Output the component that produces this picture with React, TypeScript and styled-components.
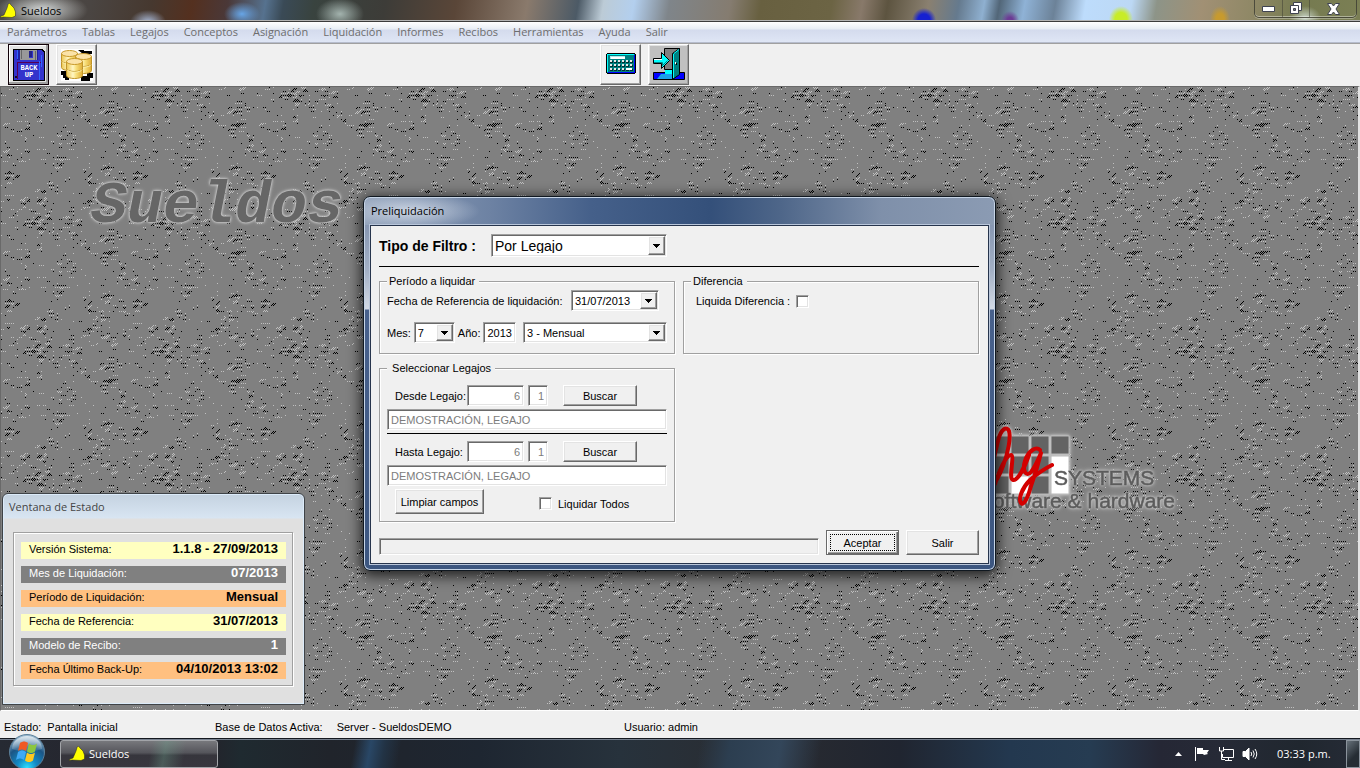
import React from "react";
import styled, { createGlobalStyle, css } from "styled-components";

const GlobalStyle = createGlobalStyle`
  * { box-sizing: border-box; }
  body { margin: 0; background: #f0f0f0; }
  body, button, input, select {
    font-family: "Liberation Sans", Arial, sans-serif;
    font-size: 11px;
    line-height: 14px;
    color: #000;
  }
`;

const uiFont = `"Open Sans", "Noto Sans", sans-serif`;

const sunken = css`
  border: 1px solid;
  border-color: #a0a0a0 #fff #fff #a0a0a0;
  box-shadow: inset 1px 1px #696969, inset -1px -1px #e3e3e3;
`;
const raised = css`
  border: 1px solid;
  border-color: #fff #696969 #696969 #fff;
  box-shadow: inset -1px -1px #a0a0a0, inset 1px 1px #e3e3e3;
`;

const Screen = styled.div`
  display: flex;
  flex-direction: column;
  min-height: 100vh;
`;

/* ---------- main window chrome ---------- */

const TitleBar = styled.header`
  display: flex;
  justify-content: space-between;
  height: 22px;
  padding-right: 2px;
  border-bottom: 1px solid #3c3c3c;
  box-shadow: inset 0 -1px #b4b4b4;
  font-family: ${uiFont};
  background:
    radial-gradient(ellipse 46px 18px at 42px 10px, rgba(235, 240, 240, 0.85), transparent),
    radial-gradient(ellipse 18px 12px at 148px 22px, #a9b9d8, transparent),
    radial-gradient(ellipse 18px 12px at 242px 14px, #67a5e6, transparent),
    radial-gradient(ellipse 24px 16px at 340px 14px, #a3b3ae, transparent),
    radial-gradient(ellipse 12px 12px at 924px 20px, #1620d0 50%, transparent),
    radial-gradient(ellipse 9px 9px at 1010px 20px, #6c3b94 30%, transparent),
    radial-gradient(ellipse 12px 13px at 1121px 19px, #c8ec28 50%, transparent),
    radial-gradient(ellipse 10px 13px at 1220px 19px, #c79a2e 40%, transparent),
    radial-gradient(ellipse 16px 12px at 1305px 18px, #c6d2c4, transparent),
    linear-gradient(100deg,
      #4b4a48 0px, #4a4542 90px, #46382f 150px, #54301f 190px, #4a3838 225px,
      #56728f 262px, #3a4a56 280px, #39433f 310px, #3d3c38 380px, #5a4638 450px,
      #8a7a6c 520px, #4c5a66 570px, #bccbd6 595px, #b3cfee 625px, #7f858a 660px,
      #857c70 720px, #686040 750px, #6c6444 820px, #88796a 850px, #5d5440 875px,
      #8a8070 915px, #657a8e 945px, #8fb0d0 970px, #526678 985px, #8fb2d6 1010px,
      #6c8298 1040px, #bddcfc 1070px, #bcd8f4 1115px, #8d9488 1140px, #a19074 1185px,
      #8f8866 1235px, #757a50 1280px, #7b7f54 1340px);
`;
const AppTitle = styled.h1`
  display: flex;
  align-items: center;
  gap: 5px;
  margin: 0;
  font-size: 11px;
  line-height: 20px;
  font-weight: 400;
`;
const WindowControls = styled.div`
  display: flex;
  height: 18px;
  margin-right: 1px;
  border: 1px solid rgba(60, 60, 50, 0.8);
  border-top: 0;
  border-radius: 0 0 5px 5px;
  box-shadow: inset 0 -1px rgba(255, 255, 255, 0.4), 0 1px rgba(255, 255, 255, 0.3);
`;
const WindowControl = styled.button<{ $wide?: boolean }>`
  display: grid;
  place-items: center;
  width: ${(p) => (p.$wide ? 47 : 27)}px;
  padding: 0;
  border: 0;
  border-left: 1px solid rgba(60, 60, 50, 0.5);
  background: transparent;
  &:first-child { border-left: 0; }
`;

const MenuBar = styled.nav`
  display: flex;
  gap: 15px;
  height: 21px;
  padding: 0 7px;
  border-bottom: 1px solid #b6bccc;
  background: linear-gradient(#fff 0, #e8edf5 7px, #d4dbed 8px, #dfe6f5 100%);
`;
const MenuLink = styled.a`
  color: #6d6d6d;
  font-family: ${uiFont};
  font-size: 11px;
  line-height: 20px;
  text-decoration: none;
`;

const ToolBar = styled.div`
  display: grid;
  grid-template-columns: 592fr 760fr;
  padding: 1px 0 1px 8px;
  background: #f0f0f0;
  box-shadow: inset 0 1px #a0a0a0;
`;
const ToolGroup = styled.div`
  display: flex;
  gap: 7px;
`;
const ToolButton = styled.button<{ $face?: string; $focused?: boolean }>`
  display: grid;
  place-items: center;
  width: 41px;
  height: 41px;
  padding: 0;
  background: ${(p) => p.$face || "#f0f0f0"};
  ${raised}
  ${(p) => p.$focused && css`
    border-color: #100008;
    background: #e3e3e3;
    box-shadow: inset -2px -2px #a0a0a0, inset 1px 1px #fff;
  `}
`;

/* ---------- desktop ---------- */

const Desktop = styled.main`
  position: relative;
  flex: 1;
  min-height: 620px;
  overflow: hidden;
  border: 1px solid #696969;
  border-right: 2px solid #e3e3e3;
  border-bottom: 1px solid #fff;
  background: #808080;
`;
const Texture = styled.svg`
  display: block;
  position: absolute;
  inset: 0;
  width: 100%;
  height: 100%;
`;
const Watermark = styled.div`
  position: absolute;
  left: 90px;
  top: 86px;
  font-family: "Liberation Mono", "Courier New", monospace;
  font-size: 60px;
  line-height: 66px;
  font-weight: 700;
  font-style: italic;
  color: #666;
  text-shadow: 0 0 2px #d0d0d0, 0 0 3px #c8c8c8, 0 0 4px #b8b8b8;
`;
const CompanyLogo = styled.svg`
  position: absolute;
  left: 969px;
  top: 333px;
  filter: drop-shadow(0 0 1px #c8c8c8) drop-shadow(0 0 2px #c0c0c0);
`;

/* ---------- status window ---------- */

const StatusWindow = styled.section`
  position: absolute;
  left: 1px;
  top: 406px;
  width: 303px;
  padding: 0 11px 18px 10px;
  border: 1px solid #3f4347;
  border-radius: 6px 6px 0 0;
  box-shadow: inset 0 0 0 1px #dcebf9;
  background: linear-gradient(#c4d2e0 0, #d8e5f2 24px, #e0e0e0 25px);
`;
const StatusTitle = styled.h2`
  margin: 0 0 12px -4px;
  font-family: ${uiFont};
  font-size: 11px;
  line-height: 26px;
  font-weight: 400;
  color: #444;
`;
const StatusList = styled.dl`
  display: flex;
  flex-direction: column;
  gap: 7px;
  margin: 0;
  padding: 9px 6px 6px 7px;
  border: 1px solid #a0a0a0;
  box-shadow: inset 1px 1px #fff, 1px 1px #fff;
`;
const StatusRow = styled.div<{ $tone: "yellow" | "gray" | "orange" }>`
  display: flex;
  justify-content: space-between;
  height: 17px;
  padding: 0 8px;
  line-height: 14px;
  background: ${(p) => ({ yellow: "#ffffc0", gray: "#808080", orange: "#ffc080" })[p.$tone]};
  color: ${(p) => (p.$tone === "gray" ? "#fff" : "#000")};
  dd { margin: 0; font-size: 13px; font-weight: 700; }
`;

/* ---------- dialog ---------- */

const Dialog = styled.section`
  position: absolute;
  left: 362px;
  top: 109px;
  width: 633px;
  padding: 0 6px 6px;
  border: 1px solid #101820;
  border-radius: 7px;
  box-shadow: inset 0 0 0 1px #c6d4e6, 0 3px 14px 2px rgba(0, 0, 0, 0.75);
  background:
    radial-gradient(ellipse 70px 18px at 46px 14px, rgba(225, 232, 242, 0.75), transparent) no-repeat 0 0 / 100% 28px,
    linear-gradient(90deg, #93a3bb 0, #6d82a3 20%, #45608a 36%, #34507a 55%, #4e6689 66%, #7f90aa 82%, #8b9bb3 100%) no-repeat 0 0 / 100% 28px,
    linear-gradient(#8797b2 28px, #a3b0c5 74px, #d3dae5 112px, #48618c 113px, #3c5680 100%);
`;
const DialogTitle = styled.h2`
  margin: 0;
  padding-left: 1px;
  font-family: ${uiFont};
  font-size: 11px;
  line-height: 28px;
  font-weight: 400;
`;
const DialogBody = styled.form`
  padding: 8px 9px 8px 8px;
  border: 1px solid #26344c;
  background: #f0f0f0;
  outline: 1px solid #b9c6da;
`;
const FilterRow = styled.div`
  display: flex;
  align-items: center;
  gap: 11px;
  padding-bottom: 9px;
  border-bottom: 1px solid #000;
`;
const FilterLabel = styled.label`
  padding-top: 2px;
  font-size: 14px;
  font-weight: 700;
  line-height: 21px;
  min-width: 101px;
`;
const Columns = styled.div`
  display: grid;
  grid-template-columns: 1fr 1fr;
  gap: 7px 8px;
  padding: 7px 0 8px;
`;
const Group = styled.fieldset`
  min-width: 0;
  margin: 0;
  padding: 2px 7px 7px;
  border: 1px solid #a0a0a0;
  box-shadow: 1px 1px #fff, inset 1px 1px #fff;
`;
const PeriodGroup = styled(Group)`
  padding-bottom: 10px;
`;
const GroupCaption = styled.legend`
  padding: 0 4px 0 2px;
  background: #f0f0f0;
`;
const Line = styled.div<{ $gap?: number; $indent?: number; $top?: number }>`
  display: flex;
  align-items: center;
  gap: ${(p) => p.$gap ?? 4}px;
  padding-left: ${(p) => p.$indent ?? 0}px;
  margin-top: ${(p) => p.$top ?? 0}px;
`;
const Push = styled.div`
  display: flex;
  margin-left: auto;
  margin-right: 8px;
`;
const Combo = styled.span<{ $width: number; $big?: boolean }>`
  display: flex;
  flex: none;
  width: ${(p) => p.$width}px;
  height: ${(p) => (p.$big ? 23 : 21)}px;
  padding: 1px;
  background: #fff;
  ${sunken}
  select, input {
    appearance: none;
    flex: 1;
    min-width: 0;
    padding: 0 2px;
    border: 0;
    border-radius: 0;
    outline: 0;
    background: transparent;
    font-size: ${(p) => (p.$big ? 14 : 11)}px;
  }
`;
const PeriodCombo = styled(Combo)`
  margin-left: auto;
`;
const ArrowBox = styled.span`
  display: grid;
  place-items: center;
  width: 17px;
  background: #f0f0f0;
  ${raised}
`;
const TextBox = styled.input<{ $width?: number; $right?: boolean }>`
  width: ${(p) => (p.$width ? p.$width + "px" : "100%")};
  height: 21px;
  padding: 0 3px;
  border-radius: 0;
  outline: 0;
  background: #fff;
  text-align: ${(p) => (p.$right ? "right" : "left")};
  ${sunken}
  &:disabled { color: #7c7c7c; background: #fff; }
`;
const RowLabel = styled.label`
  flex: none;
  width: 68px;
  white-space: nowrap;
`;
const Rule = styled.hr`
  height: 1px;
  margin: 3px 0 7px;
  border: 0;
  background: #000;
`;
const PushButton = styled.button<{ $width: number; $tall?: boolean }>`
  width: ${(p) => p.$width}px;
  height: ${(p) => (p.$tall ? 25 : 21)}px;
  padding: 0;
  background: #f0f0f0;
  ${raised}
`;
const SearchButton = styled(PushButton)`
  margin-left: 11px;
`;
const DefaultButton = styled(PushButton)`
  border-color: #696969;
  box-shadow: inset 1px 1px #fff, inset -1px -1px #696969, inset -2px -2px #a0a0a0;
  outline: 1px dotted #000;
  outline-offset: -5px;
`;
const Check = styled.input`
  appearance: none;
  width: 13px;
  height: 13px;
  margin: 0;
  background: #fff;
  ${sunken}
  &:checked { background: radial-gradient(#000 3px, #fff 4px); }
`;
const Footer = styled.div`
  display: flex;
  align-items: end;
  gap: 7px;
`;
const Progress = styled.div`
  flex: 1;
  height: 17px;
  ${sunken}
`;

/* ---------- bottom bars ---------- */

const StatusBar = styled.footer`
  display: grid;
  grid-template-columns: 211fr 409fr 736fr;
  align-items: center;
  height: 27px;
  padding: 4px 0 0 4px;
  background: #f0f0f0;
`;
const StatusItem = styled.div<{ $gap?: number }>`
  display: flex;
  gap: ${(p) => p.$gap ?? 6}px;
`;
const TaskBar = styled.div`
  display: flex;
  align-items: center;
  justify-content: space-between;
  height: 30px;
  padding-left: 9px;
  border-top: 1px solid #14181f;
  box-shadow: inset 0 1px #76808e;
  background:
    linear-gradient(100deg, transparent 350px, #294766 366px, #223345 380px, transparent 396px),
    linear-gradient(100deg, transparent 690px, #2c3e50 720px, #33465a 770px, transparent 810px),
    linear-gradient(90deg, #262a33 0, #242129 200px, #1f2a30 240px, #20242b 330px, #1e2631 480px, #27323c 620px, #2a2c31 760px, #202530 900px, #23384f 1010px, #263c52 1090px, #252735 1160px, #262a36 1220px, #20272f 1300px, #262b36 1360px);
`;
const StartArea = styled.div`
  display: flex;
  align-items: center;
  gap: 15px;
`;
const StartButton = styled.button`
  width: 36px;
  height: 36px;
  margin-top: -4px;
  padding: 0;
  border: 0;
  background: transparent;
`;
const TaskButton = styled.button`
  display: flex;
  align-items: center;
  gap: 4px;
  width: 158px;
  height: 28px;
  padding: 0 8px;
  border: 1px solid #a2a4a8;
  border-radius: 3px;
  font-family: ${uiFont};
  font-size: 11px;
  color: #fff;
  background: linear-gradient(100deg, transparent 90px, rgba(110, 160, 140, 0.35) 104px, transparent 124px),
    linear-gradient(#77787c 0, #55555b 45%, #36353c 55%, #38363e 100%);
`;
const Tray = styled.div`
  display: flex;
  align-items: center;
  height: 100%;
  gap: 8px;
  color: #fff;
  font-family: ${uiFont};
  font-size: 11px;
`;
const TrayButton = styled.button`
  display: grid;
  place-items: center;
  width: 16px;
  height: 18px;
  padding: 0;
  border: 0;
  background: transparent;
`;
const Clock = styled.time`
  width: 55px;
  margin: 0 6px 0 11px;
  white-space: nowrap;
`;
const ShowDesktop = styled.button`
  width: 14px;
  height: 28px;
  border: 1px solid #8b939c;
  background: linear-gradient(135deg, #67717a, #262d34 60%);
`;

/* ---------- desktop grain ---------- */

const TILE = 128;

function buildGrain() {
  let seed = 20131;
  const rand = () => {
    seed = (seed * 48271) % 2147483647;
    return seed / 2147483647;
  };
  const makeLayer = (cx: number, cy: number) => {
    const w = TILE / cx;
    const h = TILE / cy;
    const g = Array.from({ length: w * h }, rand);
    return (x: number, y: number) => {
      const fx = (x / cx) % w;
      const fy = (y / cy) % h;
      const x0 = Math.floor(fx);
      const y0 = Math.floor(fy);
      const tx = fx - x0;
      const ty = fy - y0;
      const at = (i: number, j: number) => g[((j + h) % h) * w + ((i + w) % w)];
      return (
        (at(x0, y0) * (1 - tx) + at(x0 + 1, y0) * tx) * (1 - ty) +
        (at(x0, y0 + 1) * (1 - tx) + at(x0 + 1, y0 + 1) * tx) * ty
      );
    };
  };
  const coarse = makeLayer(8, 8);
  const mid = makeLayer(4, 4);
  const fine = makeLayer(4, 2);
  const field = (x: number, y: number) => mid(x, y) * 0.6 + fine(x, y) * 0.8;
  let light = "";
  let dark = "";
  for (let y = 0; y < TILE; y += 1) {
    for (let x = y % 2; x < TILE; x += 2) {
      const slope = field(x, y) - field(x + 1, (y + 2) % TILE);
      const limit = 0.84 - coarse(x, y) * 0.76;
      if (slope > limit) light += `M${x} ${y}h1v1h-1z`;
      else if (slope < -limit - 0.02) dark += `M${x} ${y}h1v1h-1z`;
    }
  }
  return { light, dark };
}
const grain = buildGrain();

/* ---------- drawings ---------- */

const Bird = ({ size = 16 }: { size?: number }) => (
  <svg width={size} height={size} viewBox="0 0 16 16" aria-hidden="true">
    <path d="M0 14.500 1 13 4 12 7 5 8 1.500 9.500 0 11 2 14 5 15.500 9 15.500 13 12 14.500 3 14z" fill="#ff0" stroke="#222" strokeWidth=".5" />
  </svg>
);

const FloppyIcon = () => (
  <svg width="32" height="32" shapeRendering="crispEdges" aria-hidden="true">
    <path d="M0 0h29l3 3v29H0z" fill="#000" />
    <path d="M1 1h27l3 3v27H1z" fill="#33c" />
    <path d="M4 1h21v10H4z" fill="#2020a0" />
    <path d="M7 1h17v10H7z" fill="#999" />
    <path d="M8 1h1v9H8zM22 2h1v9h-1z" fill="#666" />
    <path d="M16 2h4v7h-4z" fill="#33c" /><path d="M16 2h3v6h-3z" fill="#228" />
    <path d="M4 13h24v1H5v16H4z" fill="#505" />
    <path d="M26 12h1v19h-1zM4 1h1v9H4zM28 6h1v12h-1z" fill="#36f" />
    <path d="M2 27h2v2H2z" fill="#112" />
    <text x="16" y="21" textAnchor="middle" fontFamily="Liberation Mono, monospace" fontWeight="700" fontSize="7" fill="#fff">BACK</text>
    <text x="16" y="28" textAnchor="middle" fontFamily="Liberation Mono, monospace" fontWeight="700" fontSize="7" fill="#fff">UP</text>
  </svg>
);

const Drum = ({ x, y }: { x: number; y: number }) => (
  <g transform={`translate(${x} ${y})`}>
    <path d="M.5 3.500v14c0 4 16 4 16 0v-14z" fill="url(#gold)" stroke="#c0952a" />
    <path d="M.5 10.500c0 4 16 4 16 0" fill="none" stroke="#b88a20" />
    <path d="M1 11.500c1 3.500 14 3.500 15 0" fill="none" stroke="#fff4b0" />
    <ellipse cx="8.500" cy="3.500" rx="8" ry="3" fill="#fbe3a8" stroke="#c8992a" />
  </g>
);
const DataIcon = () => (
  <svg width="32" height="32" aria-hidden="true">
    <defs>
      <linearGradient id="gold">
        <stop offset="0" stopColor="#ecc650" /><stop offset=".4" stopColor="#fff6c4" />
        <stop offset=".6" stopColor="#f8e07c" /><stop offset="1" stopColor="#deac34" />
      </linearGradient>
    </defs>
    <path d="M0 0h32v32H0z" fill="#fff" />
    <path d="M17 1h6v1h8v3h-9zM0 22h5v3h3v6H4v-2H2v-3H0zM20 27h6v-3h6v5h-3v3h-9z" fill="#000" />
    <Drum x={0} y={1} /><Drum x={14} y={4} /><Drum x={5} y={9} />
  </svg>
);

const CalculatorIcon = () => (
  <svg width="32" height="32" shapeRendering="crispEdges" aria-hidden="true">
    <path d="M2 4h28v1h1v19h-1v1H2v-1H1V5h1z" fill="#000" />
    <path d="M2 5h28v19H2z" fill="#008080" />
    <path d="M2 5h27v1H3v17H2z" fill="#0ff" />
    <path d="M29 6h1v18H3v-1h26z" fill="#00f" />
    <path d="M5 7h15v3H5z" fill="#fff" /><path d="M5 7h15v1H6v2H5z" fill="#aee" />
    {[12, 16, 20].map((y) =>
      [5, 9, 13, 17, 21, 25].map((x) => (
        <g key={`${x}-${y}`}>
          <path d={`M${x} ${y}h3v2h-3z`} fill="#033" />
          <path d={`M${x} ${y - 1}h2v2h-2z`} fill="#e8e8e8" />
        </g>
      ))
    )}
    <path d="M21 19h6v2h-6z" fill="#fff" />
  </svg>
);

const DoorIcon = () => (
  <svg width="34" height="34" viewBox="0 0 34 34" aria-hidden="true">
    <path d="M1.500 24.500h31v7h-31z" fill="#00f" stroke="#000" />
    <path d="M13 21h7v5H13z" fill="#0ff" />
    <path d="M9 26h11v5H5z" fill="#1ba0e8" />
    <path d="M12.500.500h15v21h-15z" fill="#808080" stroke="#000" />
    <path d="M20.500 5.500 27.500.500v26l-7 5z" fill="#008080" stroke="#000" />
    <path d="M21.500 6v24M22 5.500l5-4" stroke="#0ff" />
    <path d="M24 15h1v2h-1z" fill="#000" /><path d="M23 14h1v2h-1z" fill="#fff" />
    <path d="M1.500 10.500h8v-6l8 8-8 8v-5h-8z" fill="#0ff" stroke="#000" />
    <path d="M2 14.500h8.500v3l5-5" fill="none" stroke="#088" />
    <path d="M2 11.500h8" stroke="#fff" />
  </svg>
);

const Arrow = () => (
  <ArrowBox aria-hidden="true">
    <svg width="7" height="4" shapeRendering="crispEdges"><path d="M0 0h7v1H0zM1 1h5v1H1zM2 2h3v1H2zM3 3h1v1H3z" /></svg>
  </ArrowBox>
);

const HgLogo = () => (
  <CompanyLogo width="220" height="110" role="img" aria-label="hg Systems software & hardware">
    <g fill="#636363" stroke="#b8b8b8" strokeWidth="1">
      <path d="M21 16h18v18H21zM41 16h18v18H41zM61 16h18v18H61zM81 16h18v18H81zM21 36h18v18H21zM41 36h18v18H41zM61 36h18v18H61zM21 56h18v18H21zM61 56h18v18H61z" />
      <path d="M81 36h18v38H81zM41 56h18v18H41z" fill="#fff" />
    </g>
    <g fill="#5c5c5c" stroke="#5c5c5c" strokeWidth=".5" fontFamily="Liberation Sans, Arial, sans-serif">
      <text x="84" y="65" fontSize="21">SYSTEMS</text>
      <text x="205" y="88" fontSize="21" textAnchor="end">software &amp; hardware</text>
    </g>
    <path
      d="M22 66c4-4 8-12 11-20 5-13 8-28 6-35-2-5-8-3-11 10-4 15-7 32-6 44M25 64c4-13 11-29 16-29 4 1-3 23 2 25 5 1 12-14 16-25M70 30c-4-4-12 1-15 11-3 9 1 17 6 11 4-5 7-12 10-19-3 12-6 22-10 33-3 11-7 20-10 17-3-4 1-15 9-23 8-7 14-11 22-15"
      fill="none" stroke="#d40000" strokeWidth="4" strokeLinecap="round" strokeLinejoin="round"
    />
  </CompanyLogo>
);

const StartOrb = () => (
  <svg width="36" height="36" viewBox="0 0 36 36" aria-hidden="true">
    <defs>
      <radialGradient id="orb" cx=".5" cy=".95" r=".95">
        <stop offset="0" stopColor="#2fe0ff" /><stop offset=".3" stopColor="#1289c4" />
        <stop offset=".65" stopColor="#1b5585" /><stop offset="1" stopColor="#a7c4d8" />
      </radialGradient>
      <linearGradient id="gloss" x2="0" y2="1">
        <stop offset="0" stopColor="#fff" stopOpacity=".7" /><stop offset="1" stopColor="#fff" stopOpacity=".1" />
      </linearGradient>
    </defs>
    <circle cx="18" cy="18" r="17.500" fill="url(#orb)" stroke="#5c7f99" />
    <path d="M3 15a15 13 0 0 1 30 0c-8 3-22 3-30 0z" fill="url(#gloss)" />
    <path d="M11 9c3-2 5-2 8 0l-2 8c-3-2-5-2-8 0z" fill="#ef5a24" />
    <path d="M20 9.500c3 2 5 2 8 0l-2 8c-3 2-5 2-8 0z" fill="#8cc63f" />
    <path d="M9 18c3-2 5-2 8 0l-2 8c-3-2-5-2-8 0z" fill="#3fa9f5" />
    <path d="M18 18.500c3 2 5 2 8 0l-2 8c-3 2-5 2-8 0z" fill="#ffc81e" />
  </svg>
);

/* ---------- content ---------- */

const menu = ["Parámetros", "Tablas", "Legajos", "Conceptos", "Asignación", "Liquidación", "Informes", "Recibos", "Herramientas", "Ayuda", "Salir"];

const statusRows: { label: string; value: string; tone: "yellow" | "gray" | "orange" }[] = [
  { label: "Versión Sistema:", value: "1.1.8 - 27/09/2013", tone: "yellow" },
  { label: "Mes de Liquidación:", value: "07/2013", tone: "gray" },
  { label: "Período de Liquidación:", value: "Mensual", tone: "orange" },
  { label: "Fecha de Referencia:", value: "31/07/2013", tone: "yellow" },
  { label: "Modelo de Recibo:", value: "1", tone: "gray" },
  { label: "Fecha Último Back-Up:", value: "04/10/2013 13:02", tone: "orange" },
];

const EmployeePicker = ({ id, label }: { id: string; label: string }) => (
  <>
    <Line $indent={8}>
      <RowLabel htmlFor={id}>{label}</RowLabel>
      <TextBox id={id} $width={57} $right disabled defaultValue="6" />
      <TextBox $width={20} $right disabled defaultValue="1" aria-label={`${label} secuencia`} />
      <SearchButton type="button" $width={74}>Buscar</SearchButton>
    </Line>
    <Line $top={3}>
      <TextBox disabled defaultValue="DEMOSTRACIÓN, LEGAJO" aria-label={`${label} nombre`} />
    </Line>
  </>
);

const PreliquidationDialog = () => (
  <Dialog role="dialog" aria-labelledby="dialog-title">
    <DialogTitle id="dialog-title">Preliquidación</DialogTitle>
    <DialogBody onSubmit={(e) => e.preventDefault()}>
      <FilterRow>
        <FilterLabel htmlFor="filter">Tipo de Filtro :</FilterLabel>
        <Combo $width={176} $big>
          <select id="filter"><option>Por Legajo</option></select>
          <Arrow />
        </Combo>
      </FilterRow>
      <Columns>
        <PeriodGroup>
          <GroupCaption>Período a liquidar</GroupCaption>
          <Line>
            <label htmlFor="ref-date">Fecha de Referencia de liquidación:</label>
            <Push>
              <Combo $width={88}>
                <input id="ref-date" defaultValue="31/07/2013" />
                <Arrow />
              </Combo>
            </Push>
          </Line>
          <Line $top={11} $gap={3}>
            <label htmlFor="month">Mes:</label>
            <Combo $width={41}>
              <select id="month"><option>7</option></select>
              <Arrow />
            </Combo>
            <label htmlFor="year">Año:</label>
            <TextBox id="year" $width={33} defaultValue="2013" />
            <PeriodCombo $width={144}>
              <select aria-label="Período"><option>3 - Mensual</option></select>
              <Arrow />
            </PeriodCombo>
          </Line>
        </PeriodGroup>
        <Group>
          <GroupCaption>Diferencia</GroupCaption>
          <Line $gap={6} $indent={5} $top={4}>
            <label htmlFor="diff">Liquida Diferencia :</label>
            <Check id="diff" type="checkbox" />
          </Line>
        </Group>
        <Group>
          <GroupCaption>&nbsp;Seleccionar Legajos</GroupCaption>
          <Line $top={8} />
          <EmployeePicker id="from" label="Desde Legajo:" />
          <Rule />
          <EmployeePicker id="to" label="Hasta Legajo:" />
          <Line $indent={8} $top={3} $gap={55}>
            <PushButton type="button" $width={89} $tall>Limpiar campos</PushButton>
            <Line $gap={6} $top={4}>
              <Check id="all" type="checkbox" />
              <label htmlFor="all">Liquidar Todos</label>
            </Line>
          </Line>
        </Group>
      </Columns>
      <Footer>
        <Progress role="progressbar" aria-label="Progreso" />
        <DefaultButton type="submit" $width={73} $tall>Aceptar</DefaultButton>
        <PushButton type="button" $width={73} $tall>Salir</PushButton>
      </Footer>
    </DialogBody>
  </Dialog>
);

export default function App() {
  return (
    <Screen>
      <GlobalStyle />
      <TitleBar>
        <AppTitle><Bird />Sueldos</AppTitle>
        <WindowControls>
          <WindowControl aria-label="Minimizar">
            <svg width="13" height="6"><path d="M.5.500h12v5H.500z" fill="#fff" stroke="#3f4350" /></svg>
          </WindowControl>
          <WindowControl aria-label="Restaurar">
            <svg width="13" height="13">
              <path d="M3.500.500h8v8h-8z" fill="#fff" stroke="#3f4350" />
              <path d="M.5 3.500h8v8h-8z" fill="#fff" stroke="#3f4350" />
              <path d="M3.500 6.500h2v2h-2z" fill="#777" stroke="#3f4350" />
            </svg>
          </WindowControl>
          <WindowControl $wide aria-label="Cerrar">
            <svg width="13" height="12">
              <path d="M.5.500h4L6.500 3l2-2.500h4L9 6l3.500 5.500h-4L6.500 9l-2 2.500h-4L4 6z" fill="#fff" stroke="#3f4350" />
            </svg>
          </WindowControl>
        </WindowControls>
      </TitleBar>
      <MenuBar>
        {menu.map((m) => <MenuLink key={m} href="#">{m}</MenuLink>)}
      </MenuBar>
      <ToolBar>
        <ToolGroup>
          <ToolButton $focused aria-label="Back up"><FloppyIcon /></ToolButton>
          <ToolButton aria-label="Bases de datos"><DataIcon /></ToolButton>
        </ToolGroup>
        <ToolGroup>
          <ToolButton aria-label="Calculadora"><CalculatorIcon /></ToolButton>
          <ToolButton $face="#c0c0c0" aria-label="Salir"><DoorIcon /></ToolButton>
        </ToolGroup>
      </ToolBar>
      <Desktop>
        <Texture shapeRendering="crispEdges" aria-hidden="true">
          <defs>
            <pattern id="grain" width={TILE} height={TILE} patternUnits="userSpaceOnUse">
              <path d={grain.light} fill="#c0c0c0" />
              <path d={grain.dark} fill="#000" />
            </pattern>
          </defs>
          <rect width="100%" height="100%" fill="url(#grain)" />
        </Texture>
        <Watermark>Sueldos</Watermark>
        <HgLogo />
        <StatusWindow>
          <StatusTitle>Ventana de Estado</StatusTitle>
          <StatusList>
            {statusRows.map((r) => (
              <StatusRow key={r.label} $tone={r.tone}>
                <dt>{r.label}</dt>
                <dd>{r.value}</dd>
              </StatusRow>
            ))}
          </StatusList>
        </StatusWindow>
        <PreliquidationDialog />
      </Desktop>
      <StatusBar>
        <StatusItem><span>Estado:</span><span>Pantalla inicial</span></StatusItem>
        <StatusItem $gap={14}><span>Base de Datos Activa:</span><span>Server - SueldosDEMO</span></StatusItem>
        <StatusItem>Usuario: admin</StatusItem>
      </StatusBar>
      <TaskBar>
        <StartArea>
          <StartButton aria-label="Inicio"><StartOrb /></StartButton>
          <TaskButton><Bird />Sueldos</TaskButton>
        </StartArea>
        <Tray>
          <TrayButton aria-label="Mostrar iconos ocultos">
            <svg width="7" height="4"><path d="M0 4 3.500 0 7 4z" fill="#fff" /></svg>
          </TrayButton>
          <TrayButton aria-label="Centro de actividades">
            <svg width="16" height="16"><path d="M1.500 1v14" stroke="#fff" /><path d="M3 2h6v2h6l-2 3 1 1-4 1-1-1H3z" fill="#fff" /></svg>
          </TrayButton>
          <TrayButton aria-label="Red">
            <svg width="16" height="16" fill="none" stroke="#fff">
              <path d="M6 3.500h9.500v8H4.500V8M7 14.500h7M10.500 12v2" />
              <path d="M1.500 1v4h4V1M3.500 5v8.500H7" />
            </svg>
          </TrayButton>
          <TrayButton aria-label="Volumen">
            <svg width="16" height="16" fill="none" stroke="#fff">
              <path d="M1 5.500h2.500L7 2v12l-3.500-3.500H1z" fill="#fff" />
              <path d="M9 6q1.500 2 0 4M11 4.500q2.500 3.500 0 7M13 3q3.500 5 0 10" />
            </svg>
          </TrayButton>
          <Clock>03:33 p.m.</Clock>
          <ShowDesktop aria-label="Mostrar escritorio" />
        </Tray>
      </TaskBar>
    </Screen>
  );
}
